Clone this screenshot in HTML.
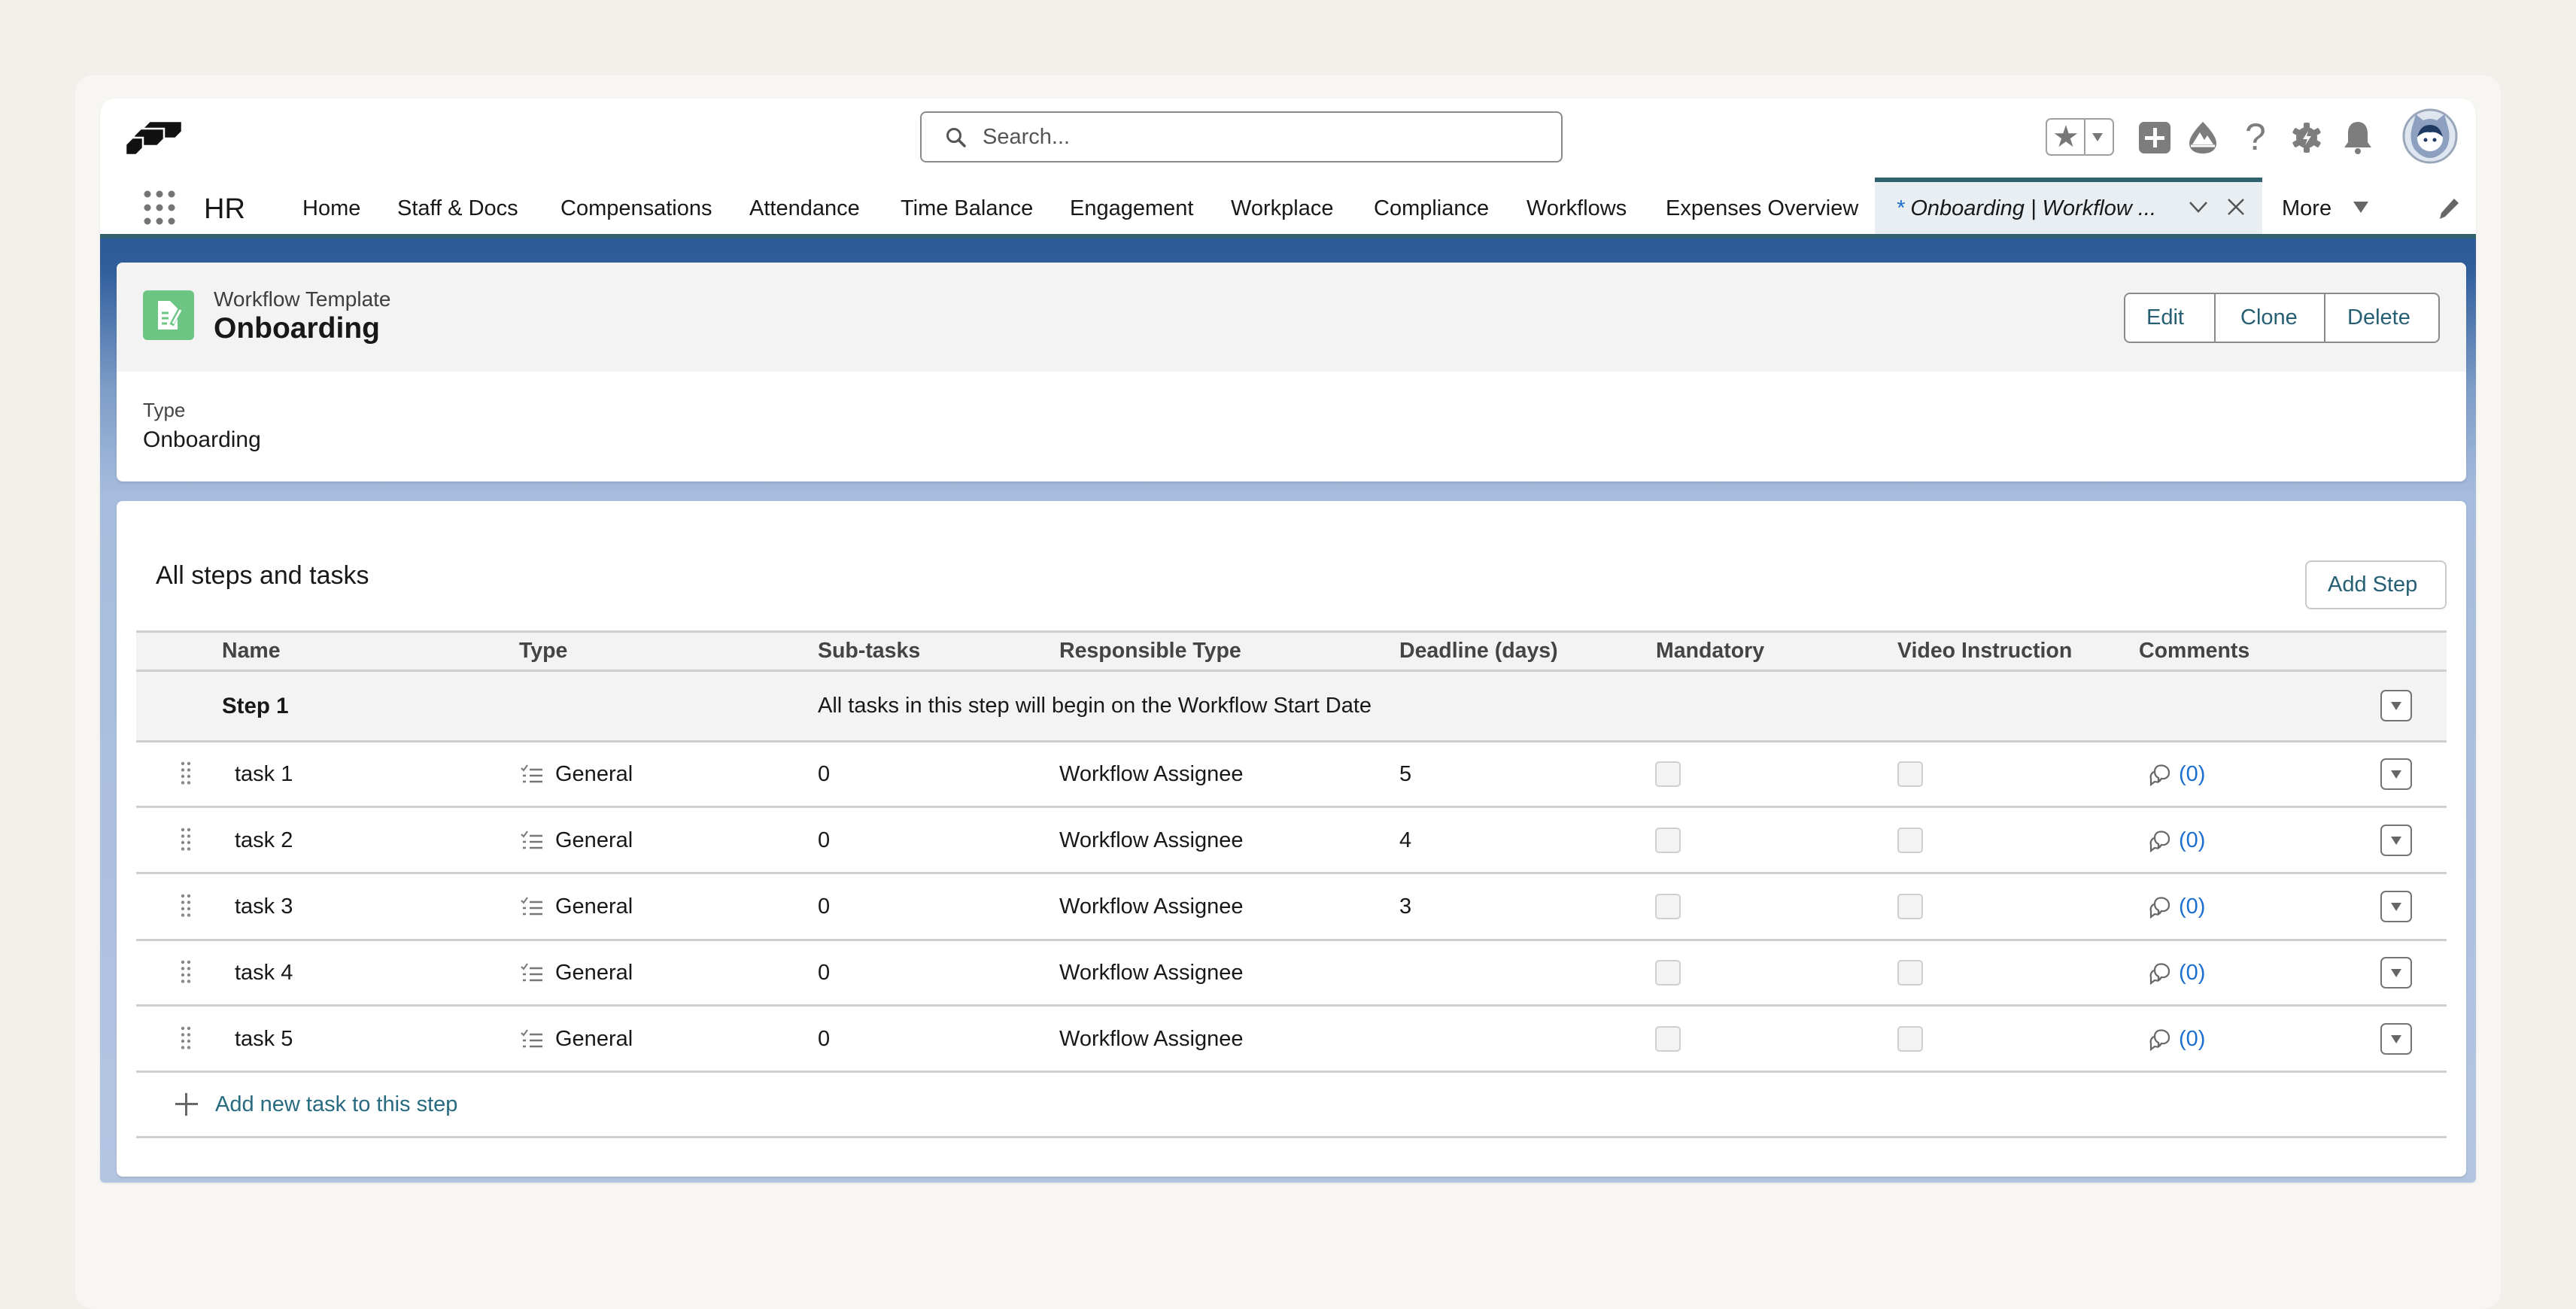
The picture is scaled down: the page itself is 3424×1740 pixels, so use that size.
<!DOCTYPE html>
<html><head><meta charset="utf-8"><style>
*{margin:0;padding:0;box-sizing:border-box}
body{width:3424px;height:1690px;overflow:hidden;background:#f2f0eb;font-family:"Liberation Sans",Arial,sans-serif;color:#181818;position:relative}
.a{position:absolute}
.t{position:absolute;white-space:nowrap;line-height:1}
.nav{font-size:29px;top:263px;color:#181818}
.hl{position:absolute;left:181px;width:3071px;height:3px;background:#cfcfcf}
.th{font-size:28.5px;font-weight:bold;color:#444;top:851px}
.td{font-size:29px;color:#181818}
.cb{position:absolute;width:34px;height:34px;border:2px solid #cfcfcf;border-radius:5px;background:#f3f3f3}
.dd{position:absolute;left:3164px;width:42px;height:42px;border:2px solid #747474;border-radius:7px;background:#fff}
.dd:after{content:"";position:absolute;left:12px;top:14px;border-left:7px solid transparent;border-right:7px solid transparent;border-top:11px solid #666}
.lnk{color:#1b6fd0}
</style></head><body>
<div class="a" style="left:100px;top:100px;width:3224px;height:1640px;background:#f7f6f2;border-radius:24px"></div>
<!-- app -->
<div class="a" style="left:133px;top:131px;width:3158px;height:1441px;background:#fff;border-radius:20px 20px 6px 6px;overflow:hidden;box-shadow:0 1px 3px rgba(0,0,0,.08)">
  <div class="a" style="left:0;top:186px;width:3158px;height:1255px;background:linear-gradient(#2c5b98 0px,#2f5e9b 40px,#7f9dc8 200px,#a6bcdc 340px,#b3c5e1 1255px)"></div>
  <div class="a" style="left:0;top:180px;width:3158px;height:6px;background:#31616f"></div>
</div>
<!-- logo -->
<svg class="a" style="left:160px;top:155px" width="90" height="58" viewBox="160 155 90 58">
<g fill="#111" stroke="#fff" stroke-width="2.5">
<polygon points="199,161 242,161 242,175 233,184 190,184 190,170"/>
<polygon points="187,171 218,171 218,185 209,194 178,194 178,180"/>
<polygon points="176,183 190,183 190,197 181,206 167,206 167,192"/>
</g></svg>
<!-- search -->
<div class="a" style="left:1223px;top:148px;width:854px;height:68px;border:2px solid #8a8a8a;border-radius:8px;background:#fff"></div>
<svg class="a" style="left:1256px;top:168px" width="30" height="30" viewBox="0 0 30 30"><circle cx="12" cy="12" r="8.5" fill="none" stroke="#555" stroke-width="3"/><line x1="18" y1="18" x2="26" y2="26" stroke="#555" stroke-width="3.5" stroke-linecap="round"/></svg>
<div class="t" style="left:1306px;top:168px;font-size:29px;color:#555">Search...</div>
<!-- right icons -->
<div class="a" style="left:2719px;top:157px;width:91px;height:50px;border:2px solid #a0a0a0;border-radius:7px;background:#fff"></div>
<div class="a" style="left:2770px;top:158px;width:2px;height:48px;background:#a0a0a0"></div>
<div class="t" style="left:2728px;top:162px;font-size:40px;color:#777">★</div>
<div class="a" style="left:2781px;top:177px;border-left:7px solid transparent;border-right:7px solid transparent;border-top:11px solid #777"></div>
<div class="a" style="left:2843px;top:162px;width:42px;height:42px;background:#7d7d7d;border-radius:7px"></div>
<div class="a" style="left:2862px;top:170px;width:5px;height:26px;background:#fff"></div>
<div class="a" style="left:2851px;top:181px;width:26px;height:5px;background:#fff"></div>
<svg class="a" style="left:2906px;top:160px" width="44" height="46" viewBox="0 0 44 46"><path d="M22 2 C14 10 4 22 4 30 C4 40 12 44 22 44 C32 44 40 40 40 30 C40 22 30 10 22 2Z" fill="#7d7d7d"/><path d="M8 32 L18 16 L24 26 L28 20 L36 32Z" fill="#fff"/><path d="M6 34 H38" stroke="#fff" stroke-width="3"/></svg>
<div class="t" style="left:2984px;top:157px;font-size:50px;color:#7d7d7d">?</div>
<svg class="a" style="left:3044px;top:160px" width="44" height="46" viewBox="0 0 44 46"><g fill="#7d7d7d"><circle cx="22" cy="23" r="14"/><rect x="18" y="3" width="8" height="40" rx="2"/><rect x="18" y="3" width="8" height="40" rx="2" transform="rotate(60 22 23)"/><rect x="18" y="3" width="8" height="40" rx="2" transform="rotate(120 22 23)"/></g><path d="M24 14 L17 25 H23 L20 33 L28 21 H22Z" fill="#fff"/></svg>
<svg class="a" style="left:3113px;top:159px" width="42" height="48" viewBox="0 0 42 48"><path d="M21 3 C12 3 8 10 8 18 V30 L3 37 H39 L34 30 V18 C34 10 30 3 21 3Z" fill="#7d7d7d"/><circle cx="21" cy="42" r="4" fill="#7d7d7d"/></svg>
<svg class="a" style="left:3193px;top:144px" width="74" height="74" viewBox="0 0 74 74"><circle cx="37" cy="37" r="35" fill="#dfe6ef" stroke="#9aa7b8" stroke-width="3"/><path d="M14 22 L18 8 L28 16 Q37 12 46 16 L56 8 L60 22 Q66 40 58 54 Q48 66 37 66 Q26 66 16 54 Q8 40 14 22Z" fill="#8da0c0"/><circle cx="37" cy="40" r="17" fill="#fff"/><path d="M20 38 Q24 22 37 22 Q50 22 54 38 Q46 30 37 32 Q28 30 20 38Z" fill="#1f3a63"/><circle cx="31" cy="42" r="2.5" fill="#1f3a63"/><circle cx="43" cy="42" r="2.5" fill="#1f3a63"/></svg>
<!-- nav -->
<svg class="a" style="left:190px;top:252px" width="46" height="48" viewBox="0 0 46 48"><g fill="#747474"><circle cx="6" cy="6" r="4.5"/><circle cx="22" cy="6" r="4.5"/><circle cx="38" cy="6" r="4.5"/><circle cx="6" cy="24" r="4.5"/><circle cx="22" cy="24" r="4.5"/><circle cx="38" cy="24" r="4.5"/><circle cx="6" cy="42" r="4.5"/><circle cx="22" cy="42" r="4.5"/><circle cx="38" cy="42" r="4.5"/></g></svg>
<div class="t" style="left:271px;top:259px;font-size:38px">HR</div>
<div class="t nav" style="left:402px">Home</div>
<div class="t nav" style="left:528px">Staff &amp; Docs</div>
<div class="t nav" style="left:745px">Compensations</div>
<div class="t nav" style="left:996px">Attendance</div>
<div class="t nav" style="left:1197px">Time Balance</div>
<div class="t nav" style="left:1422px">Engagement</div>
<div class="t nav" style="left:1636px">Workplace</div>
<div class="t nav" style="left:1826px">Compliance</div>
<div class="t nav" style="left:2029px">Workflows</div>
<div class="t nav" style="left:2214px">Expenses Overview</div>
<div class="a" style="left:2492px;top:236px;width:515px;height:75px;background:#e9eef2;border-top:6px solid #31616f"></div>
<div class="t nav" style="left:2520px;font-style:italic"><span style="color:#1b6fd0">*</span> Onboarding | Workflow ...</div>
<svg class="a" style="left:2909px;top:266px" width="26" height="18" viewBox="0 0 26 18"><path d="M2 3 L13 15 L24 3" fill="none" stroke="#555" stroke-width="2.5"/></svg>
<svg class="a" style="left:2960px;top:263px" width="24" height="24" viewBox="0 0 24 24"><path d="M2 2 L22 22 M22 2 L2 22" stroke="#555" stroke-width="2.5"/></svg>
<div class="t nav" style="left:3033px">More</div>
<div class="a" style="left:3128px;top:268px;border-left:10px solid transparent;border-right:10px solid transparent;border-top:15px solid #666"></div>
<svg class="a" style="left:3240px;top:262px" width="30" height="32" viewBox="0 0 30 32"><path d="M22 2 L28 8 L10 26 L3 29 L5 21Z" fill="#666"/></svg>
<!-- header card -->
<div class="a" style="left:155px;top:349px;width:3123px;height:291px;background:#fff;border-radius:8px;overflow:hidden;box-shadow:0 2px 3px rgba(0,0,0,.1)">
  <div class="a" style="left:0;top:0;width:3123px;height:145px;background:#f3f3f3"></div>
</div>
<div class="a" style="left:190px;top:386px;width:68px;height:66px;background:#6cc583;border-radius:6px"></div>
<svg class="a" style="left:190px;top:386px" width="68" height="66" viewBox="0 0 68 66"><path d="M20 14 H36 L46 24 V52 H20Z" fill="#fff"/><g stroke="#6cc583" stroke-width="3"><line x1="25" y1="30" x2="34" y2="30"/><line x1="25" y1="37" x2="34" y2="37"/><line x1="25" y1="44" x2="32" y2="44"/></g><path d="M50 24 L38 46" stroke="#6cc583" stroke-width="6"/><path d="M50 26 L40 44" stroke="#fff" stroke-width="3"/></svg>
<div class="t" style="left:284px;top:384px;font-size:28px;color:#3e3e3c">Workflow Template</div>
<div class="t" style="left:284px;top:417px;font-size:39px;font-weight:bold">Onboarding</div>
<div class="a" style="left:2823px;top:389px;width:420px;height:67px;border:2px solid #8a8a8a;border-radius:8px;background:#fff"></div>
<div class="a" style="left:2943px;top:390px;width:2px;height:65px;background:#8a8a8a"></div>
<div class="a" style="left:3089px;top:390px;width:2px;height:65px;background:#8a8a8a"></div>
<div class="t" style="left:2853px;top:408px;font-size:29px;color:#265f73">Edit</div>
<div class="t" style="left:2978px;top:408px;font-size:29px;color:#265f73">Clone</div>
<div class="t" style="left:3120px;top:408px;font-size:29px;color:#265f73">Delete</div>
<div class="t" style="left:190px;top:532px;font-size:26px;color:#444">Type</div>
<div class="t" style="left:190px;top:570px;font-size:30px">Onboarding</div>
<!-- card 2 -->
<div class="a" style="left:155px;top:666px;width:3123px;height:898px;background:#fff;border-radius:8px;box-shadow:0 2px 3px rgba(0,0,0,.1)"></div>
<div class="t" style="left:207px;top:748px;font-size:34px">All steps and tasks</div>
<div class="a" style="left:3064px;top:745px;width:188px;height:65px;border:2px solid #c9c9c9;border-radius:8px;background:#fff"></div>
<div class="t" style="left:3094px;top:763px;font-size:29px;color:#265f73">Add Step</div>
<!-- table -->
<div class="a" style="left:181px;top:839px;width:3071px;height:146px;background:#f3f3f3"></div>
<div class="hl" style="top:838px"></div>
<div class="hl" style="top:890px"></div>
<div class="hl" style="top:984px"></div>
<div class="hl" style="top:1071px"></div>
<div class="hl" style="top:1159px"></div>
<div class="hl" style="top:1248px"></div>
<div class="hl" style="top:1335px"></div>
<div class="hl" style="top:1423px"></div>
<div class="hl" style="top:1510px"></div>
<div class="t th" style="left:295px">Name</div>
<div class="t th" style="left:690px">Type</div>
<div class="t th" style="left:1087px">Sub-tasks</div>
<div class="t th" style="left:1408px">Responsible Type</div>
<div class="t th" style="left:1860px">Deadline (days)</div>
<div class="t th" style="left:2201px">Mandatory</div>
<div class="t th" style="left:2522px">Video Instruction</div>
<div class="t th" style="left:2843px">Comments</div>
<div class="t td" style="left:295px;top:924px;font-weight:bold;font-size:29.5px">Step 1</div>
<div class="t td" style="left:1087px;top:924px">All tasks in this step will begin on the Workflow Start Date</div>
<div class="dd" style="top:917px"></div>

<!-- row 1 -->
<svg class="a" style="left:240px;top:1012px" width="14" height="32"><g fill="#888"><circle cx="3" cy="3" r="2.2"/><circle cx="11" cy="3" r="2.2"/><circle cx="3" cy="11.5" r="2.2"/><circle cx="11" cy="11.5" r="2.2"/><circle cx="3" cy="20" r="2.2"/><circle cx="11" cy="20" r="2.2"/><circle cx="3" cy="28.5" r="2.2"/><circle cx="11" cy="28.5" r="2.2"/></g></svg>
<div class="t td" style="left:312px;top:1015px">task 1</div>
<svg class="a" style="left:692px;top:1016px" width="30" height="26"><path d="M1 5 L4 8 L9 1" fill="none" stroke="#777" stroke-width="2"/><g stroke="#777" stroke-width="2.5"><line x1="12" y1="7" x2="29" y2="7"/><line x1="12" y1="15" x2="29" y2="15"/><line x1="12" y1="23" x2="29" y2="23"/><line x1="3" y1="15" x2="7" y2="15"/><line x1="3" y1="23" x2="7" y2="23"/></g></svg>
<div class="t td" style="left:738px;top:1015px">General</div>
<div class="t td" style="left:1087px;top:1015px">0</div>
<div class="t td" style="left:1408px;top:1015px">Workflow Assignee</div>
<div class="t td" style="left:1860px;top:1015px">5</div>
<div class="cb" style="left:2200px;top:1012px"></div>
<div class="cb" style="left:2522px;top:1012px"></div>
<svg class="a" style="left:2855px;top:1014px" width="32" height="32" viewBox="0 0 32 32"><path d="M14 4 C21 2 28 6 28 13 C28 19 23 22 18 21 L14 25 L14 20 C10 18 9 15 9 12 C9 8 11 5 14 4Z" fill="none" stroke="#666" stroke-width="2.2"/><path d="M8 12 C4 14 3 18 4 21 L4 29 L9 25 C12 26 15 25 17 23" fill="none" stroke="#666" stroke-width="2.2"/></svg>
<div class="t td lnk" style="left:2896px;top:1015px">(0)</div>
<div class="dd" style="top:1008px"></div>

<!-- row 2 -->
<svg class="a" style="left:240px;top:1100px" width="14" height="32"><g fill="#888"><circle cx="3" cy="3" r="2.2"/><circle cx="11" cy="3" r="2.2"/><circle cx="3" cy="11.5" r="2.2"/><circle cx="11" cy="11.5" r="2.2"/><circle cx="3" cy="20" r="2.2"/><circle cx="11" cy="20" r="2.2"/><circle cx="3" cy="28.5" r="2.2"/><circle cx="11" cy="28.5" r="2.2"/></g></svg>
<div class="t td" style="left:312px;top:1103px">task 2</div>
<svg class="a" style="left:692px;top:1104px" width="30" height="26"><path d="M1 5 L4 8 L9 1" fill="none" stroke="#777" stroke-width="2"/><g stroke="#777" stroke-width="2.5"><line x1="12" y1="7" x2="29" y2="7"/><line x1="12" y1="15" x2="29" y2="15"/><line x1="12" y1="23" x2="29" y2="23"/><line x1="3" y1="15" x2="7" y2="15"/><line x1="3" y1="23" x2="7" y2="23"/></g></svg>
<div class="t td" style="left:738px;top:1103px">General</div>
<div class="t td" style="left:1087px;top:1103px">0</div>
<div class="t td" style="left:1408px;top:1103px">Workflow Assignee</div>
<div class="t td" style="left:1860px;top:1103px">4</div>
<div class="cb" style="left:2200px;top:1100px"></div>
<div class="cb" style="left:2522px;top:1100px"></div>
<svg class="a" style="left:2855px;top:1102px" width="32" height="32" viewBox="0 0 32 32"><path d="M14 4 C21 2 28 6 28 13 C28 19 23 22 18 21 L14 25 L14 20 C10 18 9 15 9 12 C9 8 11 5 14 4Z" fill="none" stroke="#666" stroke-width="2.2"/><path d="M8 12 C4 14 3 18 4 21 L4 29 L9 25 C12 26 15 25 17 23" fill="none" stroke="#666" stroke-width="2.2"/></svg>
<div class="t td lnk" style="left:2896px;top:1103px">(0)</div>
<div class="dd" style="top:1096px"></div>

<!-- row 3 -->
<svg class="a" style="left:240px;top:1188px" width="14" height="32"><g fill="#888"><circle cx="3" cy="3" r="2.2"/><circle cx="11" cy="3" r="2.2"/><circle cx="3" cy="11.5" r="2.2"/><circle cx="11" cy="11.5" r="2.2"/><circle cx="3" cy="20" r="2.2"/><circle cx="11" cy="20" r="2.2"/><circle cx="3" cy="28.5" r="2.2"/><circle cx="11" cy="28.5" r="2.2"/></g></svg>
<div class="t td" style="left:312px;top:1191px">task 3</div>
<svg class="a" style="left:692px;top:1192px" width="30" height="26"><path d="M1 5 L4 8 L9 1" fill="none" stroke="#777" stroke-width="2"/><g stroke="#777" stroke-width="2.5"><line x1="12" y1="7" x2="29" y2="7"/><line x1="12" y1="15" x2="29" y2="15"/><line x1="12" y1="23" x2="29" y2="23"/><line x1="3" y1="15" x2="7" y2="15"/><line x1="3" y1="23" x2="7" y2="23"/></g></svg>
<div class="t td" style="left:738px;top:1191px">General</div>
<div class="t td" style="left:1087px;top:1191px">0</div>
<div class="t td" style="left:1408px;top:1191px">Workflow Assignee</div>
<div class="t td" style="left:1860px;top:1191px">3</div>
<div class="cb" style="left:2200px;top:1188px"></div>
<div class="cb" style="left:2522px;top:1188px"></div>
<svg class="a" style="left:2855px;top:1190px" width="32" height="32" viewBox="0 0 32 32"><path d="M14 4 C21 2 28 6 28 13 C28 19 23 22 18 21 L14 25 L14 20 C10 18 9 15 9 12 C9 8 11 5 14 4Z" fill="none" stroke="#666" stroke-width="2.2"/><path d="M8 12 C4 14 3 18 4 21 L4 29 L9 25 C12 26 15 25 17 23" fill="none" stroke="#666" stroke-width="2.2"/></svg>
<div class="t td lnk" style="left:2896px;top:1191px">(0)</div>
<div class="dd" style="top:1184px"></div>

<!-- row 4 -->
<svg class="a" style="left:240px;top:1276px" width="14" height="32"><g fill="#888"><circle cx="3" cy="3" r="2.2"/><circle cx="11" cy="3" r="2.2"/><circle cx="3" cy="11.5" r="2.2"/><circle cx="11" cy="11.5" r="2.2"/><circle cx="3" cy="20" r="2.2"/><circle cx="11" cy="20" r="2.2"/><circle cx="3" cy="28.5" r="2.2"/><circle cx="11" cy="28.5" r="2.2"/></g></svg>
<div class="t td" style="left:312px;top:1279px">task 4</div>
<svg class="a" style="left:692px;top:1280px" width="30" height="26"><path d="M1 5 L4 8 L9 1" fill="none" stroke="#777" stroke-width="2"/><g stroke="#777" stroke-width="2.5"><line x1="12" y1="7" x2="29" y2="7"/><line x1="12" y1="15" x2="29" y2="15"/><line x1="12" y1="23" x2="29" y2="23"/><line x1="3" y1="15" x2="7" y2="15"/><line x1="3" y1="23" x2="7" y2="23"/></g></svg>
<div class="t td" style="left:738px;top:1279px">General</div>
<div class="t td" style="left:1087px;top:1279px">0</div>
<div class="t td" style="left:1408px;top:1279px">Workflow Assignee</div>
<div class="cb" style="left:2200px;top:1276px"></div>
<div class="cb" style="left:2522px;top:1276px"></div>
<svg class="a" style="left:2855px;top:1278px" width="32" height="32" viewBox="0 0 32 32"><path d="M14 4 C21 2 28 6 28 13 C28 19 23 22 18 21 L14 25 L14 20 C10 18 9 15 9 12 C9 8 11 5 14 4Z" fill="none" stroke="#666" stroke-width="2.2"/><path d="M8 12 C4 14 3 18 4 21 L4 29 L9 25 C12 26 15 25 17 23" fill="none" stroke="#666" stroke-width="2.2"/></svg>
<div class="t td lnk" style="left:2896px;top:1279px">(0)</div>
<div class="dd" style="top:1272px"></div>

<!-- row 5 -->
<svg class="a" style="left:240px;top:1364px" width="14" height="32"><g fill="#888"><circle cx="3" cy="3" r="2.2"/><circle cx="11" cy="3" r="2.2"/><circle cx="3" cy="11.5" r="2.2"/><circle cx="11" cy="11.5" r="2.2"/><circle cx="3" cy="20" r="2.2"/><circle cx="11" cy="20" r="2.2"/><circle cx="3" cy="28.5" r="2.2"/><circle cx="11" cy="28.5" r="2.2"/></g></svg>
<div class="t td" style="left:312px;top:1367px">task 5</div>
<svg class="a" style="left:692px;top:1368px" width="30" height="26"><path d="M1 5 L4 8 L9 1" fill="none" stroke="#777" stroke-width="2"/><g stroke="#777" stroke-width="2.5"><line x1="12" y1="7" x2="29" y2="7"/><line x1="12" y1="15" x2="29" y2="15"/><line x1="12" y1="23" x2="29" y2="23"/><line x1="3" y1="15" x2="7" y2="15"/><line x1="3" y1="23" x2="7" y2="23"/></g></svg>
<div class="t td" style="left:738px;top:1367px">General</div>
<div class="t td" style="left:1087px;top:1367px">0</div>
<div class="t td" style="left:1408px;top:1367px">Workflow Assignee</div>
<div class="cb" style="left:2200px;top:1364px"></div>
<div class="cb" style="left:2522px;top:1364px"></div>
<svg class="a" style="left:2855px;top:1366px" width="32" height="32" viewBox="0 0 32 32"><path d="M14 4 C21 2 28 6 28 13 C28 19 23 22 18 21 L14 25 L14 20 C10 18 9 15 9 12 C9 8 11 5 14 4Z" fill="none" stroke="#666" stroke-width="2.2"/><path d="M8 12 C4 14 3 18 4 21 L4 29 L9 25 C12 26 15 25 17 23" fill="none" stroke="#666" stroke-width="2.2"/></svg>
<div class="t td lnk" style="left:2896px;top:1367px">(0)</div>
<div class="dd" style="top:1360px"></div>

<!-- add task -->
<div class="a" style="left:233px;top:1466px;width:30px;height:3px;background:#666"></div>
<div class="a" style="left:246px;top:1453px;width:3px;height:30px;background:#666"></div>
<div class="t td" style="left:286px;top:1454px;color:#286a80">Add new task to this step</div>
</body></html>
